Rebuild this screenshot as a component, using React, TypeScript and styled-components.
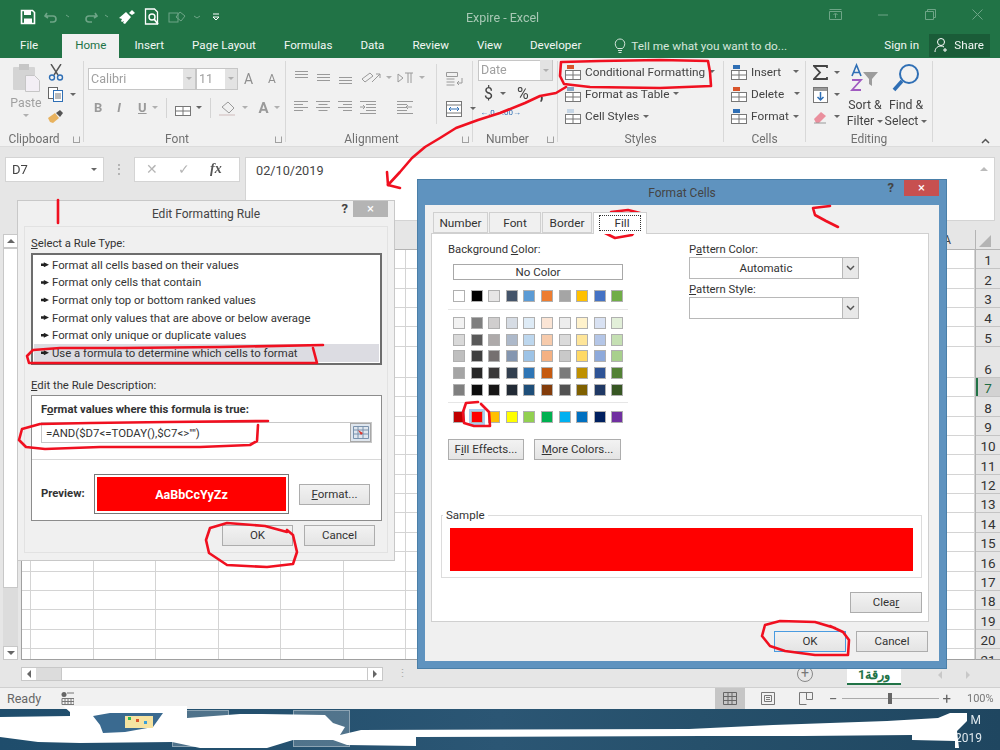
import React from "react";
import styled, { createGlobalStyle } from "styled-components";

const Global = createGlobalStyle`
  html, body { margin: 0; padding: 0; background: #e6e6e6; }
  body { font-family: Roboto, "Noto Sans", sans-serif; font-size: 12.3px; color: #333; }
  * { box-sizing: border-box; }
  u { text-underline-offset: 1px; }
`;

const Page = styled.div`
  position: relative;
  width: 1000px;
  height: 750px;
  overflow: hidden;
  display: flex;
  flex-direction: column;
  filter: blur(0.3px);
`;

/* title bar */
const TitleBar = styled.div`
  height: 34px;
  background: #217346;
  display: flex;
  align-items: center;
  position: relative;
  color: #b4d0bf;
  padding-left: 20px;
  gap: 8px;
`;
const TitleText = styled.div`
  position: absolute;
  left: 466px;
  top: 9px;
  font-size: 12.5px;
  line-height: 17px;
  color: #a8c8b5;
`;
const WinControls = styled.div`
  position: absolute;
  right: 17px;
  top: 9px;
  display: flex;
  align-items: center;
  gap: 36px;
`;

/* tabs */
const TabRow = styled.div`
  height: 24px;
  background: #217346;
  display: flex;
  align-items: stretch;
  padding-left: 6px;
  color: #f2f7f4;
  font-size: 11.6px;
`;
const Tab = styled.div<{ $active?: boolean }>`
  padding: ${(p) => (p.$active ? "0 13px" : "0 14px")};
  margin: ${(p) => (p.$active ? "0 1px 0 10px" : "0")};
  line-height: 22px;
  white-space: nowrap;
  background: ${(p) => (p.$active ? "#f1f1f1" : "transparent")};
  color: ${(p) => (p.$active ? "#217346" : "inherit")};
`;
const TellMe = styled.div`
  display: flex;
  align-items: center;
  gap: 5px;
  margin-left: 19px;
  color: #d5e6dc;
  width: 270px;
  font-size: 11.8px;
  white-space: nowrap;
`;
const SignIn = styled.div`
  line-height: 22px;
  width: 45px;
`;
const ShareBox = styled.div`
  width: 61px;
  background: #1a5c38;
  display: flex;
  align-items: center;
  gap: 4px;
  padding-left: 5px;
  margin-bottom: 1px;
`;

/* ribbon */
const Ribbon = styled.div`
  height: 90px;
  background: #f1f1f1;
  display: flex;
  position: relative;
  padding: 3px 0 4px;
  border-bottom: 1px solid #dcdcdc;
`;
const Group = styled.div<{ $w: number }>`
  width: ${(p) => p.$w}px;
  flex: none;
  display: flex;
  flex-direction: column;
  border-right: 1px solid #d8d8d8;
  position: relative;
`;
const GroupBody = styled.div`
  flex: 1;
  min-height: 0;
  display: flex;
`;
const GroupLabel = styled.div<{ $launch?: boolean }>`
  height: 16px;
  line-height: 16px;
  margin-bottom: -5px;
  padding-right: ${(p) => (p.$launch ? "15px" : "0")};
  text-align: center;
  color: #707070;
  font-size: 12px;
`;
const Launcher = styled.span`
  position: absolute;
  right: 3px;
  bottom: -1px;
  width: 7px;
  height: 7px;
  border: 1px solid #a0a0a0;
  border-top-color: transparent;
`;
const Caret = styled.span<{ $light?: boolean }>`
  display: inline-block;
  flex: none;
  width: 0;
  height: 0;
  vertical-align: middle;
  border-left: 3px solid transparent;
  border-right: 3px solid transparent;
  border-top: 3px solid ${(p) => (p.$light ? "#b0b0b0" : "#666")};
`;
const PasteCol = styled.div`
  margin-left: 12px;
  width: 28px;
  display: flex;
  flex-direction: column;
  align-items: center;
  color: #a0a0a0;
  line-height: 14px;
  padding-top: 3px;
  gap: 4px;
`;
const SideCol = styled.div<{ $ml?: number; $gap?: number }>`
  margin-left: ${(p) => p.$ml ?? 8}px;
  display: flex;
  flex-direction: column;
  gap: ${(p) => p.$gap ?? 5}px;
  padding-top: 3px;
`;
const IconLine = styled.div<{ $gap?: number }>`
  display: flex;
  align-items: center;
  gap: ${(p) => p.$gap ?? 6}px;
  height: 18px;
`;
const FontCol = styled.div`
  padding: 7px 0 0 4px;
  display: flex;
  flex-direction: column;
  gap: 9px;
`;
const ComboRow = styled.div`
  display: flex;
  align-items: center;
  height: 22px;
`;
const FontCombo = styled.div<{ $w: number }>`
  width: ${(p) => p.$w}px;
  height: 22px;
  border: 1px solid #c6c6c6;
  background: #fff;
  color: #a0a0a0;
  display: flex;
  align-items: center;
  justify-content: space-between;
  padding-left: 2px;
  font-size: 12.5px;
  line-height: 20px;
`;
const ComboArrow = styled.span`
  width: 12px;
  height: 20px;
  background: #e3e3e3;
  display: flex;
  align-items: center;
  justify-content: center;
`;
const GrowA = styled.span<{ $sz: number; $ml: number }>`
  font-size: ${(p) => p.$sz}px;
  margin-left: ${(p) => p.$ml}px;
  color: #8f8f8f;
  line-height: 20px;
  width: 16px;
`;
const StyleRow = styled.div`
  display: flex;
  align-items: center;
  gap: 5px;
  height: 18px;
  color: #9a9a9a;
  font-weight: 700;
  font-size: 13px;
`;
const StyleGlyph = styled.span<{ $ml: number; $italic?: boolean; $under?: boolean; $sz?: number }>`
  margin-left: ${(p) => p.$ml}px;
  font-style: ${(p) => (p.$italic ? "italic" : "normal")};
  text-decoration: ${(p) => (p.$under ? "underline" : "none")};
  font-size: ${(p) => p.$sz ?? 13}px;
`;
const Sep = styled.span<{ $h?: number; $mx?: number }>`
  width: 1px;
  height: ${(p) => p.$h ?? 20}px;
  margin: 0 ${(p) => p.$mx ?? 0}px;
  background: #d4d4d4;
  flex: none;
`;
const AlignGrid = styled.div`
  display: grid;
  grid-template-columns: 22px 22px 22px 37px 38px;
  grid-template-rows: 18px 18px;
  gap: 12px 0;
  padding: 8px 0 0 8px;
  width: 150px;
  align-items: center;
`;
const AlignSide = styled.div`
  display: flex;
  flex-direction: column;
  gap: 12px;
  padding: 8px 0 0 9px;
  margin-left: 1px;
  height: 60px;
  border-left: 1px solid #d8d8d8;
  margin-top: 3px;
`;
const NumberBody = styled.div`
  display: flex;
  flex-direction: column;
  padding-left: 5px;
`;
const NumCombo = styled(FontCombo)`
  height: 21px;
  margin-top: -1px;
`;
const NumRow = styled.div`
  display: flex;
  align-items: center;
  gap: 7px;
  height: 22px;
  padding: 3px 0 0 6px;
  font-size: 16px;
  color: #444;
`;
const NumGlyph = styled.span<{ $ml: number }>`
  margin-left: ${(p) => p.$ml}px;
`;
const DecRow = styled.div`
  display: flex;
  gap: 7px;
  padding: 5px 0 0 2px;
  font-size: 8px;
  line-height: 9px;
  color: #444;
`;
const DecIcon = styled.span`
  width: 15px;
  text-align: center;
  color: #2f6fb5;
`;
const StackList = styled.div<{ $pl: number }>`
  display: flex;
  flex-direction: column;
  padding-left: ${(p) => p.$pl}px;
`;
const StackItem = styled.div`
  height: 22.3px;
  display: flex;
  align-items: center;
  gap: 4px;
  white-space: nowrap;
  color: #444;
  font-size: 11.8px;
`;
const CaretGap = styled.span<{ $ml: number }>`
  display: inline-flex;
  margin-left: ${(p) => p.$ml}px;
`;
const BigCol = styled.div<{ $w: number; $ml: number }>`
  width: ${(p) => p.$w}px;
  margin-left: ${(p) => p.$ml}px;
  display: flex;
  flex-direction: column;
  align-items: center;
  line-height: 16px;
  color: #444;
  white-space: nowrap;
  padding-top: 2px;
`;
const BigIcon = styled.div`
  height: 32px;
  margin-bottom: 2px;
`;
const Collapse = styled.div`
  position: absolute;
  right: 10px;
  bottom: 2px;
`;

/* formula bar */
const FormulaBar = styled.div`
  height: 84px;
  background: #e6e6e6;
  display: flex;
  align-items: flex-start;
  padding: 10px 5px 0 5px;
`;
const NameBox = styled.div`
  width: 99px;
  height: 25px;
  background: #fff;
  border: 1px solid #d4d4d4;
  display: flex;
  align-items: center;
  justify-content: space-between;
  padding: 0 6px;
  font-size: 13px;
  color: #444;
`;
const Grip = styled.div`
  width: 30px;
  height: 25px;
  display: flex;
  align-items: center;
  justify-content: center;
  color: #999;
  font-size: 12px;
`;
const FxBox = styled.div`
  width: 106px;
  height: 25px;
  background: #fff;
  border: 1px solid #d4d4d4;
  display: flex;
  align-items: center;
  gap: 20px;
  padding-left: 11px;
  color: #b5b5b5;
  font-size: 14px;
`;
const FxText = styled.i`
  font-family: "Liberation Serif", serif;
  color: #555;
  font-size: 14px;
  font-weight: 700;
`;
const FormulaInput = styled.div`
  flex: 1;
  margin-left: 5px;
  height: 64px;
  background: #fff;
  border: 1px solid #d4d4d4;
  padding: 5px 10px;
  font-size: 12.7px;
  color: #444;
  position: relative;
`;
const ScrollUp = styled.span`
  position: absolute;
  right: 6px;
  top: 9px;
  width: 0;
  height: 0;
  border-left: 4px solid transparent;
  border-right: 4px solid transparent;
  border-bottom: 4px solid #bbb;
`;

/* sheet */
const SheetArea = styled.div`
  height: 430px;
  display: flex;
  background: #e6e6e6;
`;
const VScroll = styled.div`
  width: 15px;
  margin: 4px 3px 0 3px;
  display: flex;
  flex-direction: column;
  background: #dcdcdc;
  flex: none;
`;
const ScrollBtn = styled.div`
  height: 14px;
  background: #fff;
  border: 1px solid #c8c8c8;
  display: flex;
  align-items: center;
  justify-content: center;
  flex: none;
`;
const VThumb = styled.div`
  height: 340px;
  background: #fff;
  border: 1px solid #c8c8c8;
`;
const VTrack = styled.div`
  flex: 1;
`;
const Grid = styled.div`
  flex: 1;
  display: flex;
  flex-direction: column;
  overflow: hidden;
  border-left: 1px solid #a0a0a0;
  border-bottom: 1px solid #a0a0a0;
`;
const ColHeader = styled.div`
  height: 20px;
  flex: none;
  background: #e6e6e6;
  border-bottom: 1px solid #b4b4b4;
  text-align: right;
  padding-right: 24px;
  line-height: 20px;
  color: #444;
`;
const GridRow = styled.div<{ $h: number }>`
  height: ${(p) => p.$h}px;
  flex: none;
  display: grid;
  grid-template-columns: 9px repeat(14, 62.5px) 1fr;
  background: #fff;
  border-bottom: 1px solid #d4d4d4;
`;
const Cell = styled.div`
  border-right: 1px solid #d4d4d4;
`;
const RowHeaders = styled.div`
  width: 25px;
  flex: none;
  display: flex;
  flex-direction: column;
  overflow: hidden;
  border-left: 1px solid #b4b4b4;
  border-bottom: 1px solid #a0a0a0;
`;
const Corner = styled.div`
  height: 20px;
  flex: none;
  position: relative;
  border-bottom: 1px solid #b4b4b4;
`;
const CornerMark = styled.span`
  position: absolute;
  left: 3px;
  bottom: 2px;
  width: 0;
  height: 0;
  border-left: 12px solid transparent;
  border-bottom: 12px solid #b4b4b4;
`;
const RowHead = styled.div<{ $h: number; $on?: boolean }>`
  height: ${(p) => p.$h}px;
  flex: none;
  display: flex;
  align-items: flex-end;
  justify-content: center;
  font-size: 13.5px;
  line-height: 15px;
  color: ${(p) => (p.$on ? "#1f6b42" : "#333")};
  background: ${(p) => (p.$on ? "#d2d2d2" : "#e6e6e6")};
  border-bottom: 1px solid #c4c4c4;
  box-shadow: ${(p) => (p.$on ? "inset 2px 0 0 #217346" : "none")};
`;

/* sheet tabs and horizontal scroll */
const BottomBar = styled.div`
  height: 28px;
  background: #e6e6e6;
  display: flex;
  align-items: flex-start;
  padding: 7px 0 0 21px;
  position: relative;
  border-bottom: 1px solid #d0d0d0;
`;
const HScroll = styled.div`
  width: 362px;
  height: 14px;
  display: flex;
  border: 1px solid #c8c8c8;
  background: #dcdcdc;
`;
const HBtn = styled.div`
  width: 14px;
  background: #fff;
  display: flex;
  align-items: center;
  justify-content: center;
  flex: none;
`;
const HTrack = styled.div`
  width: 25px;
`;
const HThumb = styled.div`
  flex: 1;
  background: #fff;
  border-left: 1px solid #c8c8c8;
  border-right: 1px solid #c8c8c8;
`;
const Tri = styled.span<{ $dir: "l" | "r" | "u" | "d"; $c?: string }>`
  width: 0;
  height: 0;
  ${(p) => {
    const c = p.$c ?? "#666";
    if (p.$dir === "l") return `border-top:4px solid transparent;border-bottom:4px solid transparent;border-right:4px solid ${c};`;
    if (p.$dir === "r") return `border-top:4px solid transparent;border-bottom:4px solid transparent;border-left:4px solid ${c};`;
    if (p.$dir === "u") return `border-left:4px solid transparent;border-right:4px solid transparent;border-bottom:4px solid ${c};`;
    return `border-left:4px solid transparent;border-right:4px solid transparent;border-top:4px solid ${c};`;
  }}
`;
const HGrip = styled.div`
  margin-left: 14px;
  width: 4px;
  color: #aaa;
  line-height: 14px;
  font-size: 11px;
`;
const AddSheet = styled.div`
  margin-left: 396px;
  width: 16px;
  height: 16px;
  border: 1.5px solid #888;
  border-radius: 50%;
  color: #777;
  font-size: 14px;
  line-height: 12px;
  text-align: center;
  margin-top: -1px;
`;
const SheetTab = styled.div`
  margin-left: 34px;
  width: 54px;
  height: 18px;
  background: #fff;
  border-bottom: 2px solid #217346;
  color: #217346;
  font-weight: 700;
  font-size: 12.5px;
  text-align: center;
  line-height: 16px;
`;
const SheetNav = styled.div`
  margin-left: 37px;
  display: flex;
  gap: 24px;
  padding-top: 4px;
`;

/* status bar */
const StatusBar = styled.div`
  height: 21px;
  background: #f1f1f1;
  display: flex;
  align-items: center;
  padding: 0 7px;
  font-size: 12.5px;
  color: #666;
`;
const MacroIcon = styled.div`
  margin-left: 20px;
  display: flex;
`;
const ViewBtns = styled.div`
  margin-left: auto;
  display: flex;
  align-items: stretch;
  height: 21px;
`;
const ViewBtn = styled.div<{ $on?: boolean }>`
  width: ${(p) => (p.$on ? "30px" : "38px")};
  margin-right: ${(p) => (p.$on ? "4px" : "0")};
  display: flex;
  align-items: center;
  justify-content: center;
  background: ${(p) => (p.$on ? "#c6c6c6" : "transparent")};
`;
const ZoomWrap = styled.div`
  margin-left: 4px;
  display: flex;
  align-items: center;
  color: #666;
  font-size: 15px;
  width: 124px;
`;
const ZoomTrack = styled.div`
  width: 97px;
  height: 1px;
  margin: 0 4px;
  background: #aaa;
  position: relative;
`;
const ZoomThumb = styled.span`
  position: absolute;
  left: 46px;
  top: -5px;
  width: 4px;
  height: 11px;
  background: #666;
`;
const ZoomPct = styled.div`
  margin-left: 14px;
  width: 26px;
  font-size: 11px;
  color: #777;
`;

/* taskbar */
const Taskbar = styled.div`
  flex: 1;
  background: linear-gradient(90deg, #1f4d6c, #24506e 25%, #2b5674 50%, #26506b 70%, #1f4660);
  position: relative;
  overflow: visible;
`;
const TaskSlot = styled.div<{ $w: number; $ml: number }>`
  display: inline-block;
  width: ${(p) => p.$w}px;
  margin-left: ${(p) => p.$ml}px;
  height: 37px;
  margin-top: 1px;
  background: rgba(255, 255, 255, 0.2);
  border: 1px solid rgba(255, 255, 255, 0.35);
`;
const TaskLayer = styled.svg`
  position: absolute;
  left: 0;
  top: -3px;
`;
const ClockText = styled.div<{ $top: number; $right: number }>`
  position: absolute;
  right: ${(p) => p.$right}px;
  top: ${(p) => p.$top}px;
  color: #dfe8ee;
  font-size: 12px;
  line-height: 14px;
`;

/* dialogs, they float over the sheet */
const Dialog = styled.div<{ $x: number; $y: number; $w: number; $h: number; $blue?: boolean }>`
  position: absolute;
  left: ${(p) => p.$x}px;
  top: ${(p) => p.$y}px;
  width: ${(p) => p.$w}px;
  height: ${(p) => p.$h}px;
  background: ${(p) => (p.$blue ? "#5f93bf" : "#f0f0f0")};
  border: 1px solid ${(p) => (p.$blue ? "#4a7fa8" : "#c8c8c8")};
  display: flex;
  flex-direction: column;
  padding: ${(p) => (p.$blue ? "0 7px 7px" : "0 6px 7px")};
`;
const DlgTitle = styled.div<{ $h: number }>`
  height: ${(p) => p.$h}px;
  flex: none;
  display: flex;
  justify-content: center;
  align-items: center;
  position: relative;
  font-size: 12px;
  color: #444;
`;
const HelpMark = styled.span<{ $r: number }>`
  position: absolute;
  right: ${(p) => p.$r}px;
  top: 0;
  font-weight: 700;
  font-size: 13px;
  line-height: 16px;
  color: #444;
`;
const CloseBtn = styled.span<{ $w: number; $red?: boolean }>`
  position: absolute;
  right: 0;
  top: 0;
  width: ${(p) => p.$w}px;
  height: 16px;
  background: ${(p) => (p.$red ? "#c75050" : "#b4b4b4")};
  color: #fff;
  font-size: 13px;
  line-height: 15px;
  text-align: center;
`;
const DlgClient = styled.div`
  flex: 1;
  background: #f0f0f0;
  border: 1px solid #e2e2e2;
  padding: 9px 6px 0;
  display: flex;
  flex-direction: column;
`;
const Caption = styled.div<{ $mt?: number }>`
  margin-top: ${(p) => p.$mt ?? 0}px;
  font-size: 11.3px;
  line-height: 16px;
  color: #333;
  white-space: nowrap;
`;
const RuleList = styled.div`
  margin-top: 1px;
  height: 112px;
  width: 351px;
  border: 2px solid #6d6d6d;
  background: #fff;
  padding: 1px;
  display: flex;
  flex-direction: column;
`;
const RuleRow = styled.div<{ $on?: boolean }>`
  height: 17.6px;
  flex: none;
  display: flex;
  align-items: center;
  gap: 3px;
  padding-left: 7px;
  font-size: 11.35px;
  white-space: nowrap;
  color: #333;
  background: ${(p) => (p.$on ? "#dcdce2" : "#fff")};
`;
const RuleMark = styled.span`
  display: inline-flex;
  width: 8px;
  height: 5px;
  flex: none;
  background: #222;
  clip-path: polygon(0 25%, 35% 25%, 35% 0, 100% 50%, 35% 100%, 35% 75%, 0 75%);
`;
const RuleBox = styled.div`
  margin-top: 1px;
  width: 351px;
  height: 126px;
  border: 1px solid #8c8c8c;
  background: #fff;
  padding: 6px 9px 0;
`;
const BoldCaption = styled.div`
  font-weight: 700;
  font-size: 11.3px;
  line-height: 16px;
  color: #333;
  white-space: nowrap;
`;
const FormulaField = styled.div`
  margin-top: 4px;
  width: 331px;
  height: 21px;
  border: 1px solid #c8c8c8;
  display: flex;
  align-items: center;
  justify-content: space-between;
  padding-left: 4px;
  font-size: 11.4px;
  color: #333;
  white-space: nowrap;
`;
const RefBtn = styled.span`
  width: 21px;
  height: 19px;
  background: #dfe6ee;
  border: 1px solid #a8a8a8;
  display: flex;
  align-items: center;
  justify-content: center;
`;
const RuleSep = styled.div`
  margin: 16px -9px 0;
  height: 1px;
  background: #d8d8d8;
`;
const PreviewRow = styled.div`
  display: flex;
  align-items: center;
  margin-top: 14px;
`;
const PreviewLabel = styled(BoldCaption)`
  width: 53px;
`;
const PreviewFrame = styled.div`
  width: 195px;
  height: 40px;
  border: 1px solid #777;
  padding: 2px;
  background: #fff;
`;
const PreviewFill = styled.div`
  height: 100%;
  background: #ff0000;
  color: #fff;
  font-weight: 700;
  font-size: 12.5px;
  display: flex;
  align-items: center;
  justify-content: center;
`;
const Btn = styled.div<{ $w: number; $ml?: number; $focus?: boolean }>`
  width: ${(p) => p.$w}px;
  height: 21px;
  margin-left: ${(p) => p.$ml ?? 0}px;
  flex: none;
  background: linear-gradient(#f2f2f2, #e4e4e4);
  border: 1px solid ${(p) => (p.$focus ? "#4a9be0" : "#adadad")};
  font-size: 11.5px;
  line-height: 19px;
  text-align: center;
  color: #333;
  white-space: nowrap;
`;
const BtnRow = styled.div<{ $pl: number; $pt: number }>`
  display: flex;
  padding: ${(p) => p.$pt}px 0 0 ${(p) => p.$pl}px;
`;

/* format cells */
const FillClient = styled.div`
  flex: 1;
  background: #f0f0f0;
  padding: 7px 6px 0;
  display: flex;
  flex-direction: column;
`;
const TabStrip = styled.div`
  display: flex;
  height: 21px;
  padding-left: 2px;
  position: relative;
  z-index: 1;
`;
const DlgTab = styled.div<{ $w: number; $on?: boolean }>`
  width: ${(p) => p.$w}px;
  height: ${(p) => (p.$on ? "22px" : "21px")};
  margin-right: 1px;
  border: 1px solid #d0d0d0;
  border-bottom: ${(p) => (p.$on ? "none" : "1px solid #d0d0d0")};
  background: ${(p) => (p.$on ? "#fff" : "#f0f0f0")};
  font-size: 11.8px;
  line-height: 20px;
  text-align: center;
  color: #333;
`;
const FocusDots = styled.span`
  border: 1px dotted #333;
  padding: 0 10px 0 14px;
`;
const FillPanel = styled.div`
  width: 498px;
  height: 389px;
  border: 1px solid #d0d0d0;
  background: #fff;
  padding: 8px 9px 0 9px;
  position: relative;
`;
const PanelCols = styled.div`
  display: flex;
  height: 265px;
`;
const ColorCol = styled.div`
  width: 190px;
  padding-left: 7px;
`;
const NoColor = styled.div`
  margin: 6px 0 0 5px;
  width: 170px;
  height: 16px;
  border: 1px solid #a8a8a8;
  text-align: center;
  line-height: 14px;
  font-size: 11.5px;
`;
const SwatchGrid = styled.div<{ $gapY: number; $mt: number }>`
  display: grid;
  grid-template-columns: repeat(10, 12px);
  column-gap: 5.6px;
  row-gap: ${(p) => p.$gapY}px;
  margin: ${(p) => p.$mt}px 0 0 5px;
`;
const Swatch = styled.div<{ $c: string }>`
  width: 12px;
  height: 12px;
  background: ${(p) => p.$c};
  border: 1px solid #b0b0b0;
`;
const SwatchSel = styled(Swatch)`
  box-shadow: 0 0 0 2px #a8d0f2;
  position: relative;
`;
const SwatchSepLine = styled.div<{ $mt: number }>`
  margin: ${(p) => p.$mt}px 0 0 0;
  width: 180px;
  height: 1px;
  background: #e6e6e6;
`;
const PatternCol = styled.div`
  margin-left: 58px;
  width: 170px;
`;
const Combo = styled.div`
  margin-top: -1px;
  width: 170px;
  height: 22px;
  border: 1px solid #b8b8b8;
  display: flex;
  align-items: center;
  font-size: 11.5px;
`;
const ComboValue = styled.div`
  flex: 1;
  text-align: center;
`;
const ComboDrop = styled.div`
  width: 16px;
  height: 20px;
  background: #e8e8e8;
  border-left: 1px solid #b8b8b8;
  display: flex;
  align-items: center;
  justify-content: center;
`;
const SampleBox = styled.fieldset`
  margin: 0;
  width: 481px;
  height: 70px;
  padding: 0 8px;
  border: 1px solid #dcdcdc;
  position: absolute;
  left: 9px;
  top: 274px;
`;
const SampleLegend = styled.legend`
  padding: 0 3px;
  font-size: 11.5px;
  line-height: 14px;
  margin-left: -7px;
`;
const SampleFill = styled.div`
  height: 43px;
  margin-top: 6px;
  background: #ff0000;
`;
const ClearPos = styled.div`
  position: absolute;
  right: 6px;
  bottom: 8px;
`;
const Annot = styled.svg`
  position: absolute;
  left: 0;
  top: 0;
  pointer-events: none;
`;
const RedPath = styled.path`
  fill: none;
  stroke: #f01020;
  stroke-width: 2.6;
  stroke-linecap: round;
  stroke-linejoin: round;
`;

/* icons */
const Svg = ({ w, h, children }: { w: number; h: number; children: React.ReactNode }) => (
  <svg width={w} height={h} viewBox={`0 0 ${w} ${h}`} fill="none" style={{ flex: "none", display: "block" }}>
    {children}
  </svg>
);
const Lines = ({ kind }: { kind: "l" | "c" | "r" }) => {
  const width = [14, 9, 14, 9];
  return (
    <Svg w={15} h={14}>
      {width.map((wd, r) => {
        const x = kind === "l" ? 0 : kind === "c" ? (14 - wd) / 2 : 14 - wd;
        return <rect key={r} x={x} y={r * 3} width={wd} height={1} fill="#9a9a9a" />;
      })}
    </Svg>
  );
};
const VLines = ({ off }: { off: number }) => (
  <Svg w={15} h={14}>
    {[0, 3, 6].map((y) => (
      <rect key={y} x={1} y={off + y} width={13} height={1} fill="#9a9a9a" />
    ))}
  </Svg>
);
const Indent = ({ flip }: { flip?: boolean }) => (
  <Svg w={16} h={13}>
    {[0, 3, 6, 9, 12].map((y) => (
      <rect key={y} x={flip ? 0 : y === 0 || y === 12 ? 0 : 6} y={y} width={y === 0 || y === 12 ? 16 : 10} height={1} fill="#9a9a9a" />
    ))}
    <path d={flip ? "M15 6H9M11 4L9 6l2 2" : "M0 6h5M3 4l2 2-2 2"} stroke="#9a9a9a" />
  </Svg>
);
const Grey = "#9a9a9a";
const MiniGrid = ({ tint }: { tint?: string }) => (
  <Svg w={16} h={16}>
    <rect x=".5" y="6.5" width="15" height="9" stroke="#777" fill="#fff" />
    <path d="M.5 11h15M8 6.5v9" stroke="#777" />
    {tint && <rect x="2" y="1" width="7" height="4" fill={tint} />}
  </Svg>
);

const SWATCH_TOP = ["#ffffff", "#000000", "#e7e6e6", "#44546a", "#5b9bd5", "#ed7d31", "#a5a5a5", "#ffc000", "#4472c4", "#70ad47"];
const SWATCH_TINTS = [
  "#f2f2f2", "#7f7f7f", "#d0cece", "#d6dce4", "#deebf6", "#fbe5d5", "#ededed", "#fff2cc", "#d9e2f3", "#e2efd9",
  "#d9d9d9", "#595959", "#aeaaaa", "#adb9ca", "#bdd7ee", "#f7cbac", "#dbdbdb", "#fee599", "#b4c6e7", "#c5e0b3",
  "#bfbfbf", "#3f3f3f", "#757070", "#8496b0", "#9dc3e6", "#f4b183", "#c9c9c9", "#ffd965", "#8eaadb", "#a8d08d",
  "#a5a5a5", "#262626", "#3a3838", "#323f4f", "#2e75b5", "#c55a11", "#7b7b7b", "#bf9000", "#2f5496", "#538135",
  "#7f7f7f", "#0c0c0c", "#171616", "#222a35", "#1e4e79", "#833c0b", "#525252", "#7f6000", "#1f3864", "#375623",
];
const SWATCH_STD = ["#c00000", "#ff0000", "#ffc000", "#ffff00", "#92d050", "#00b050", "#00b0f0", "#0070c0", "#002060", "#7030a0"];

const RULES = [
  "Format all cells based on their values",
  "Format only cells that contain",
  "Format only top or bottom ranked values",
  "Format only values that are above or below average",
  "Format only unique or duplicate values",
  "Use a formula to determine which cells to format",
];

const ROW_HEIGHTS = [19, 19.4, 19.4, 19.4, 19.4, 31, 19.4, 19.4, 19.4, 19.4, 19.4, 19.4, 19.4, 19.4, 19.4, 19.4, 19.4, 19.4, 19.4, 19.4, 19.4];

const App = () => (
  <Page>
    <Global />
    <TitleBar>
      <Svg w={16} h={16}>
        <path d="M1.5 1.5h11l2 2v11h-13z" stroke="#fff" strokeWidth="1.6" />
        <rect x="4" y="2" width="7" height="4" fill="#fff" />
        <rect x="4" y="9.5" width="8" height="4.5" fill="#fff" />
      </Svg>
      <Svg w={32} h={14}>
        <path d="M3 3L1 6l3 2M1 6h8c4 0 4 6 0 6H6" stroke="#6ea587" strokeWidth="1.6" />
        <path d="M22 5l3 2" stroke="#6ea587" />
      </Svg>
      <Svg w={26} h={14}>
        <path d="M11 3l2 3-3 2M13 6H5c-4 0-4 6 0 6h3" stroke="#6ea587" strokeWidth="1.6" />
        <path d="M21 5l3 2" stroke="#6ea587" />
      </Svg>
      <Svg w={18} h={16}>
        <path d="M1 9l7-6 5 5-6 7-2-1 1-2-2 1-1-1 1-2z" fill="#fff" />
        <path d="M11 4l3-3 3 3-3 2z" fill="#fff" />
      </Svg>
      <Svg w={16} h={18}>
        <path d="M1.5 1h9l3 3v12h-12z" stroke="#fff" strokeWidth="1.3" />
        <circle cx="8" cy="9" r="3" stroke="#fff" strokeWidth="1.4" />
        <path d="M10 11l4 5" stroke="#fff" strokeWidth="1.8" />
      </Svg>
      <Svg w={36} h={14}>
        <rect x="1" y="3" width="9" height="9" stroke="#6ea587" />
        <path d="M8 7l4-5 5 4-4 5z" stroke="#6ea587" />
        <path d="M26 6l3 2 3-2" stroke="#6ea587" />
      </Svg>
      <Svg w={8} h={10}>
        <path d="M1 2h6M1 5h6l-3 3z" stroke="#fff" />
      </Svg>
      <TitleText>Expire - Excel</TitleText>
      <WinControls>
        <Svg w={13} h={11}>
          <path d="M.5 2.5h12v8H.5zM6.5 9V5M4.5 6l2-2 2 2M.5 .5h12" stroke="#6ea587" />
        </Svg>
        <Svg w={11} h={11}>
          <path d="M0 6h10" stroke="#6ea587" />
        </Svg>
        <Svg w={11} h={11}>
          <path d="M.5 2.5h8v8h-8zM2.5 2.5v-2h8v8h-2" stroke="#6ea587" />
        </Svg>
        <Svg w={11} h={11}>
          <path d="M.5.5l10 10M10.5.5l-10 10" stroke="#6ea587" />
        </Svg>
      </WinControls>
    </TitleBar>
    <TabRow>
      <Tab>File</Tab>
      <Tab $active>Home</Tab>
      <Tab>Insert</Tab>
      <Tab>Page Layout</Tab>
      <Tab>Formulas</Tab>
      <Tab>Data</Tab>
      <Tab>Review</Tab>
      <Tab>View</Tab>
      <Tab>Developer</Tab>
      <TellMe>
        <Svg w={12} h={16}>
          <path d="M3.5 10.5C-1 6 2 1 6 1s7 5 2.5 9.5zM4 12.5h4M4.5 14.5h3" stroke="#d5e6dc" />
        </Svg>
        Tell me what you want to do...
      </TellMe>
      <SignIn>Sign in</SignIn>
      <ShareBox>
        <Svg w={16} h={16}>
          <circle cx="7" cy="5" r="3.5" stroke="#fff" />
          <path d="M1 15c0-4 3-6 6-6 1 0 2 .3 3 1M11 11v4M9 13h4" stroke="#fff" />
        </Svg>
        Share
      </ShareBox>
    </TabRow>
    <Ribbon>
      <Group $w={84}>
        <GroupBody>
          <PasteCol>
            <Svg w={28} h={28}>
              <rect x="1" y="3" width="22" height="23" rx="1" fill="#d4d4d4" />
              <rect x="7" y="0" width="10" height="6" fill="#c6c6c6" />
              <path d="M13.5 11.5h9l5 5v11h-14z" fill="#f3eff5" stroke="#c6c6c6" />
            </Svg>
            <span>Paste</span>
            <Caret $light />
          </PasteCol>
          <SideCol>
            <Svg w={16} h={17}>
              <path d="M3 0l7 11M13 0L6 11" stroke="#555" strokeWidth="1.4" />
              <circle cx="4" cy="13.5" r="2.5" stroke="#2f6fb5" strokeWidth="1.4" />
              <circle cx="12" cy="13.5" r="2.5" stroke="#2f6fb5" strokeWidth="1.4" />
            </Svg>
            <IconLine>
              <Svg w={16} h={15}>
                <rect x=".5" y=".5" width="9" height="11" stroke="#666" fill="#fff" />
                <rect x="5.5" y="3.5" width="9" height="11" stroke="#2f6fb5" fill="#fff" />
                <path d="M7 7h6M7 9h6M7 11h6" stroke="#777" />
              </Svg>
              <Caret />
            </IconLine>
            <Svg w={16} h={15}>
              <path d="M0 9l7-5 4 5-6 5-3-1z" fill="#e8b25e" />
              <path d="M8 4l4-3 3 3-3 4z" fill="#555" />
            </Svg>
          </SideCol>
        </GroupBody>
        <GroupLabel $launch>Clipboard</GroupLabel>
        <Launcher />
      </Group>
      <Group $w={202}>
        <GroupBody>
          <FontCol>
            <ComboRow>
              <FontCombo $w={108}>
                Calibri
                <ComboArrow>
                  <Caret $light />
                </ComboArrow>
              </FontCombo>
              <FontCombo $w={42}>
                11
                <ComboArrow>
                  <Caret $light />
                </ComboArrow>
              </FontCombo>
              <GrowA $sz={14} $ml={6}>A</GrowA>
              <GrowA $sz={12} $ml={8}>A</GrowA>
            </ComboRow>
            <StyleRow>
              <StyleGlyph $ml={6}>B</StyleGlyph>
              <StyleGlyph $ml={10} $italic>I</StyleGlyph>
              <StyleGlyph $ml={12} $under>U</StyleGlyph>
              <Caret $light />
              <Sep $mx={3} />
              <MiniGrid />
              <Caret />
              <Sep $mx={3} />
              <Svg w={18} h={16}>
                <path d="M3 7l6-5 6 6-5 5z" stroke={Grey} />
                <rect x="0" y="14" width="16" height="2" fill="#e0d6d6" />
              </Svg>
              <Caret $light />
              <StyleGlyph $ml={6} $sz={15}>A</StyleGlyph>
              <Caret $light />
            </StyleRow>
          </FontCol>
        </GroupBody>
        <GroupLabel $launch>Font</GroupLabel>
        <Launcher />
      </Group>
      <Group $w={187}>
        <GroupBody>
          <AlignGrid>
            <VLines off={0} />
            <VLines off={3} />
            <VLines off={6} />
            <IconLine $gap={4}>
              <Svg w={22} h={16}>
                <path d="M2 9l8-6 3 3-8 6zM12 12l8-8M16 4h4v4" stroke={Grey} />
              </Svg>
              <Caret $light />
            </IconLine>
            <IconLine $gap={4}>
              <Svg w={18} h={12}>
                <path d="M1 2l5 4-5 4zM8 1h8M11 1v10M14 1v10" stroke={Grey} />
              </Svg>
              <Caret $light />
            </IconLine>
            <Lines kind="l" />
            <Lines kind="c" />
            <Lines kind="r" />
            <Indent />
            <Indent flip />
          </AlignGrid>
          <AlignSide>
            <Svg w={18} h={16}>
              <path d="M.5.5h11v4H.5zM.5 7h8M.5 10h8M.5 13h8M16 6v5h-5M13 9l-2 2 2 2" stroke={Grey} />
            </Svg>
            <IconLine $gap={8}>
              <Svg w={16} h={16}>
                <rect x=".5" y=".5" width="15" height="15" stroke="#777" fill="#fff" />
                <path d="M3 8h10M3 8l2-2M3 8l2 2M13 8l-2-2M13 8l-2 2" stroke="#2f6fb5" />
                <path d="M.5 4h15M.5 12h15" stroke="#777" />
              </Svg>
              <Caret />
            </IconLine>
          </AlignSide>
        </GroupBody>
        <GroupLabel $launch>Alignment</GroupLabel>
        <Launcher />
      </Group>
      <Group $w={85}>
        <GroupBody>
          <NumberBody>
            <NumCombo $w={75}>
              Date
              <ComboArrow>
                <Caret $light />
              </ComboArrow>
            </NumCombo>
            <NumRow>
              $<Caret />
              <NumGlyph $ml={4}>%</NumGlyph>
              <NumGlyph $ml={4}><b>,</b></NumGlyph>
            </NumRow>
            <DecRow>
              <DecIcon>←.0</DecIcon>
              <DecIcon>.00→</DecIcon>
            </DecRow>
          </NumberBody>
        </GroupBody>
        <GroupLabel $launch>Number</GroupLabel>
        <Launcher />
      </Group>
      <Group $w={166}>
        <GroupBody>
          <StackList $pl={7}>
            <StackItem>
              <MiniGrid tint="#d9542b" />
              Conditional Formatting
              <Caret />
            </StackItem>
            <StackItem>
              <MiniGrid tint="#8aa6c4" />
              Format as Table
              <Caret />
            </StackItem>
            <StackItem>
              <MiniGrid tint="#c6d6e6" />
              Cell Styles
              <Caret />
            </StackItem>
          </StackList>
        </GroupBody>
        <GroupLabel>Styles</GroupLabel>
      </Group>
      <Group $w={82}>
        <GroupBody>
          <StackList $pl={7}>
            <StackItem>
              <MiniGrid tint="#2f6fb5" />
              Insert
              <CaretGap $ml={8}>
                <Caret />
              </CaretGap>
            </StackItem>
            <StackItem>
              <MiniGrid tint="#d9542b" />
              Delete
              <CaretGap $ml={6}>
                <Caret />
              </CaretGap>
            </StackItem>
            <StackItem>
              <MiniGrid tint="#2f6fb5" />
              Format
              <Caret />
            </StackItem>
          </StackList>
        </GroupBody>
        <GroupLabel>Cells</GroupLabel>
      </Group>
      <Group $w={127}>
        <GroupBody>
          <SideCol $ml={7} $gap={4}>
            <IconLine>
              <Svg w={15} h={15}>
                <path d="M14 3V1H1l6 6.5L1 14h13v-2" stroke="#444" strokeWidth="1.8" />
              </Svg>
              <Caret />
            </IconLine>
            <IconLine>
              <Svg w={15} h={16}>
                <rect x=".5" y=".5" width="14" height="15" stroke="#777" fill="#fff" />
                <rect x="1" y="1" width="13" height="3" fill="#999" />
                <path d="M7.5 5v8M4.5 10l3 3 3-3" stroke="#2f6fb5" strokeWidth="1.5" />
              </Svg>
              <Caret />
            </IconLine>
            <IconLine>
              <Svg w={15} h={14}>
                <path d="M1 9l7-7 5 4-7 7H3z" fill="#ea8f9d" />
                <path d="M1 13h12" stroke="#999" />
              </Svg>
              <Caret />
            </IconLine>
          </SideCol>
          <BigCol $w={36} $ml={7}>
            <BigIcon>
              <Svg w={30} h={30}>
                <path d="M2 13L6.5 2 11 13M3.5 9.5h6" stroke="#2f6fb5" strokeWidth="1.6" />
                <path d="M2 17h9l-9 10h9" stroke="#a05ac0" strokeWidth="1.8" />
                <path d="M13 9h15l-6 7v7l-3-2v-5z" fill="#9c9c9c" />
              </Svg>
            </BigIcon>
            Sort &amp;
            <span>
              Filter <Caret />
            </span>
          </BigCol>
          <BigCol $w={40} $ml={3}>
            <BigIcon>
              <Svg w={30} h={30}>
                <circle cx="18" cy="11" r="9" stroke="#2f6fb5" strokeWidth="2" />
                <path d="M11 18L3 27" stroke="#2f6fb5" strokeWidth="3.6" />
              </Svg>
            </BigIcon>
            Find &amp;
            <span>
              Select <Caret />
            </span>
          </BigCol>
        </GroupBody>
        <GroupLabel>Editing</GroupLabel>
      </Group>
      <Collapse>
        <Svg w={9} h={6}>
          <path d="M1 5l3.5-3.5L8 5" stroke="#555" strokeWidth="1.5" />
        </Svg>
      </Collapse>
    </Ribbon>
    <FormulaBar>
      <NameBox>
        D7
        <Caret />
      </NameBox>
      <Grip>⋮</Grip>
      <FxBox>
        <span>✕</span>
        <span>✓</span>
        <FxText>fx</FxText>
      </FxBox>
      <FormulaInput>
        02/10/2019
        <ScrollUp />
      </FormulaInput>
    </FormulaBar>
    <SheetArea>
      <VScroll>
        <ScrollBtn>
          <Tri $dir="u" />
        </ScrollBtn>
        <VThumb />
        <VTrack />
        <ScrollBtn>
          <Tri $dir="d" />
        </ScrollBtn>
      </VScroll>
      <Grid>
        <ColHeader>A</ColHeader>
        {ROW_HEIGHTS.map((h, r) => (
          <GridRow key={r} $h={h}>
            {Array.from({ length: 16 }).map((_, c) => (
              <Cell key={c} />
            ))}
          </GridRow>
        ))}
      </Grid>
      <RowHeaders>
        <Corner>
          <CornerMark />
        </Corner>
        {ROW_HEIGHTS.map((h, r) => (
          <RowHead key={r} $h={h} $on={r === 6}>
            {r + 1}
          </RowHead>
        ))}
      </RowHeaders>
    </SheetArea>
    <BottomBar>
      <HScroll>
        <HBtn>
          <Tri $dir="l" />
        </HBtn>
        <HTrack />
        <HThumb />
        <HBtn>
          <Tri $dir="r" />
        </HBtn>
      </HScroll>
      <HGrip>⋮</HGrip>
      <AddSheet>+</AddSheet>
      <SheetTab dir="rtl">ورقة1</SheetTab>
      <SheetNav>
        <Tri $dir="l" $c="#c8c8c8" />
        <Tri $dir="r" $c="#c8c8c8" />
      </SheetNav>
    </BottomBar>
    <StatusBar>
      Ready
      <MacroIcon>
        <Svg w={13} h={13}>
          <circle cx="3" cy="2.5" r="2.5" fill="#666" />
          <path d="M6 1h7M1 6.5h12v6H1zM1 9.5h12M4 6.5v6M7 6.5v6M10 6.5v6" stroke="#777" />
        </Svg>
      </MacroIcon>
      <ViewBtns>
        <ViewBtn $on>
          <Svg w={14} h={13}>
            <path d="M.5.5h13v12H.5zM.5 4.5h13M.5 8.5h13M5 .5v12M9 .5v12" stroke="#666" />
          </Svg>
        </ViewBtn>
        <ViewBtn>
          <Svg w={14} h={13}>
            <path d="M.5.5h13v12H.5zM3.5 3.5h7v6h-7zM5 5.5h4M5 7.5h4" stroke="#777" />
          </Svg>
        </ViewBtn>
        <ViewBtn>
          <Svg w={14} h={13}>
            <path d="M.5 12.5V.5h13v7h-6V.5M.5 12.5h7" stroke="#777" />
          </Svg>
        </ViewBtn>
      </ViewBtns>
      <ZoomWrap>
        −
        <ZoomTrack>
          <ZoomThumb />
        </ZoomTrack>
        +
      </ZoomWrap>
      <ZoomPct>100%</ZoomPct>
    </StatusBar>
    <Taskbar>
      <TaskSlot $w={57} $ml={172} />
      <TaskSlot $w={57} $ml={64} />
      <ClockText $top={4} $right={19}>M</ClockText>
      <ClockText $top={22} $right={18}>2019</ClockText>
      <TaskLayer width={1000} height={42} viewBox="0 -3 1000 42">
        <path
          d="M63 -3H187V9L240 5 262 5 325 6 333 14 345 18 340 26 361 21 689 20 773 16 887 12 938 9 950 4 967 4 967 12 957 22 959 39 955 39 955 32 912 31 912 26 803 27 702 27 416 28 416 37 347 36 333 31 293 31 267 39 200 39 172 33 80 34 38 33 0 28V8L70 7 70 3Z"
          fill="#fff"
        />
        <path d="M93 7L110 4 163 4 153 18 125 23 103 24 100 16Z" fill="#3a6a90" />
        <rect x="125" y="7" width="28" height="12" fill="#f6e3a1" />
        <rect x="128" y="8" width="3" height="3" fill="#2db84d" />
        <rect x="136" y="10" width="3" height="3" fill="#d9542b" />
        <rect x="144" y="12" width="3" height="3" fill="#3a9fd8" />
      </TaskLayer>
    </Taskbar>

    <Dialog $x={17} $y={200} $w={378} $h={361}>
      <DlgTitle $h={25}>
        Edit Formatting Rule
        <HelpMark $r={40}>?</HelpMark>
        <CloseBtn $w={35}>×</CloseBtn>
      </DlgTitle>
      <DlgClient>
        <Caption>
          <u>S</u>elect a Rule Type:
        </Caption>
        <RuleList>
          {RULES.map((r, i) => (
            <RuleRow key={r} $on={i === 5}>
              <RuleMark />
              {r}
            </RuleRow>
          ))}
        </RuleList>
        <Caption $mt={13}>
          <u>E</u>dit the Rule Description:
        </Caption>
        <RuleBox>
          <BoldCaption>
            F<u>o</u>rmat values where this formula is true:
          </BoldCaption>
          <FormulaField>
            {'=AND($D7<=TODAY(),$C7<>"")'}
            <RefBtn>
              <Svg w={16} h={13}>
                <path d="M.5.5h15v12H.5zM.5 4h15M.5 8h15M5 .5v12M10 .5v12" stroke="#7a92ad" />
                <path d="M5 4l5 3-2 2z" fill="#d9342b" />
              </Svg>
            </RefBtn>
          </FormulaField>
          <RuleSep />
          <PreviewRow>
            <PreviewLabel>Preview:</PreviewLabel>
            <PreviewFrame>
              <PreviewFill>AaBbCcYyZz</PreviewFill>
            </PreviewFrame>
            <Btn $w={71} $ml={10}>
              <u>F</u>ormat...
            </Btn>
          </PreviewRow>
        </RuleBox>
        <BtnRow $pl={191} $pt={4}>
          <Btn $w={71}>OK</Btn>
          <Btn $w={71} $ml={11}>
            Cancel
          </Btn>
        </BtnRow>
      </DlgClient>
    </Dialog>

    <Dialog $x={417} $y={179} $w={530} $h={490} $blue>
      <DlgTitle $h={25}>
        Format Cells
        <HelpMark $r={45}>?</HelpMark>
        <CloseBtn $w={35} $red>×</CloseBtn>
      </DlgTitle>
      <FillClient>
        <TabStrip>
          <DlgTab $w={55}>Number</DlgTab>
          <DlgTab $w={52}>Font</DlgTab>
          <DlgTab $w={50}>Border</DlgTab>
          <DlgTab $w={54} $on>
            <FocusDots>Fill</FocusDots>
          </DlgTab>
        </TabStrip>
        <FillPanel>
          <PanelCols>
            <ColorCol>
              <Caption>
                Background <u>C</u>olor:
              </Caption>
              <NoColor>No Color</NoColor>
              <SwatchGrid $gapY={5} $mt={10}>
                {SWATCH_TOP.map((c, i) => (
                  <Swatch key={i} $c={c} />
                ))}
              </SwatchGrid>
              <SwatchSepLine $mt={7} />
              <SwatchGrid $gapY={4.7} $mt={7}>
                {SWATCH_TINTS.map((c, i) => (
                  <Swatch key={i} $c={c} />
                ))}
              </SwatchGrid>
              <SwatchSepLine $mt={6} />
              <SwatchGrid $gapY={5} $mt={8}>
                {SWATCH_STD.map((c, i) =>
                  i === 1 ? <SwatchSel key={i} $c={c} /> : <Swatch key={i} $c={c} />
                )}
              </SwatchGrid>
              <BtnRow $pl={0} $pt={16}>
                <Btn $w={76}>
                  F<u>i</u>ll Effects...
                </Btn>
                <Btn $w={87} $ml={10}>
                  <u>M</u>ore Colors...
                </Btn>
              </BtnRow>
            </ColorCol>
            <PatternCol>
              <Caption>
                P<u>a</u>ttern Color:
              </Caption>
              <Combo>
                <ComboValue>Automatic</ComboValue>
                <ComboDrop>
                  <Svg w={9} h={6}>
                    <path d="M1 1l3.5 3.5L8 1" stroke="#555" strokeWidth="1.5" />
                  </Svg>
                </ComboDrop>
              </Combo>
              <Caption $mt={3}>
                <u>P</u>attern Style:
              </Caption>
              <Combo>
                <ComboValue />
                <ComboDrop>
                  <Svg w={9} h={6}>
                    <path d="M1 1l3.5 3.5L8 1" stroke="#555" strokeWidth="1.5" />
                  </Svg>
                </ComboDrop>
              </Combo>
            </PatternCol>
          </PanelCols>
          <SampleBox>
            <SampleLegend>Sample</SampleLegend>
            <SampleFill />
          </SampleBox>
          <ClearPos>
            <Btn $w={72}>
              Clea<u>r</u>
            </Btn>
          </ClearPos>
        </FillPanel>
        <BtnRow $pl={343} $pt={9}>
          <Btn $w={72} $focus>OK</Btn>
          <Btn $w={72} $ml={10}>
            Cancel
          </Btn>
        </BtnRow>
      </FillClient>
    </Dialog>

    <Annot width={1000} height={750} viewBox="0 0 1000 750">
      <RedPath d="M562 62L600 61 660 60 708 61 710 72 711 86 660 88 590 87 564 84 560 76 561 62" />
      <RedPath d="M566 87L556 93 540 96 525 103 500 113 478 120 456 128 440 138 425 147 412 158 400 172 388 185" />
      <RedPath d="M387 172L388 185 400 188" />
      <RedPath d="M58 200V223" />
      <RedPath d="M323 345L220 347 123 348 60 348 33 350 27 356 29 363 120 363 240 363 317 363 313 348" />
      <RedPath d="M268 421L167 422 90 423 40 424 22 429 19 440 26 447 45 449 100 447 200 447 250 445 257 441 258 425" />
      <RedPath d="M287 532L265 526 227 523 210 528 206 540 209 553 227 565 267 567 293 564 297 552 293 535 287 530" />
      <RedPath d="M611 212L628 210 640 213 642 222 632 235 615 238 605 233 604 222 609 215" />
      <RedPath d="M830 206L813 208 815 215 826 221 838 227" />
      <RedPath d="M478 402L466 403 463 412 464 423 474 426 490 426 489 412 481 404" />
      <RedPath d="M835 628L815 622 780 621 765 625 762 636 770 646 785 651 815 655 848 655 849 640 843 632 830 626" />
    </Annot>
  </Page>
);

export default App;
